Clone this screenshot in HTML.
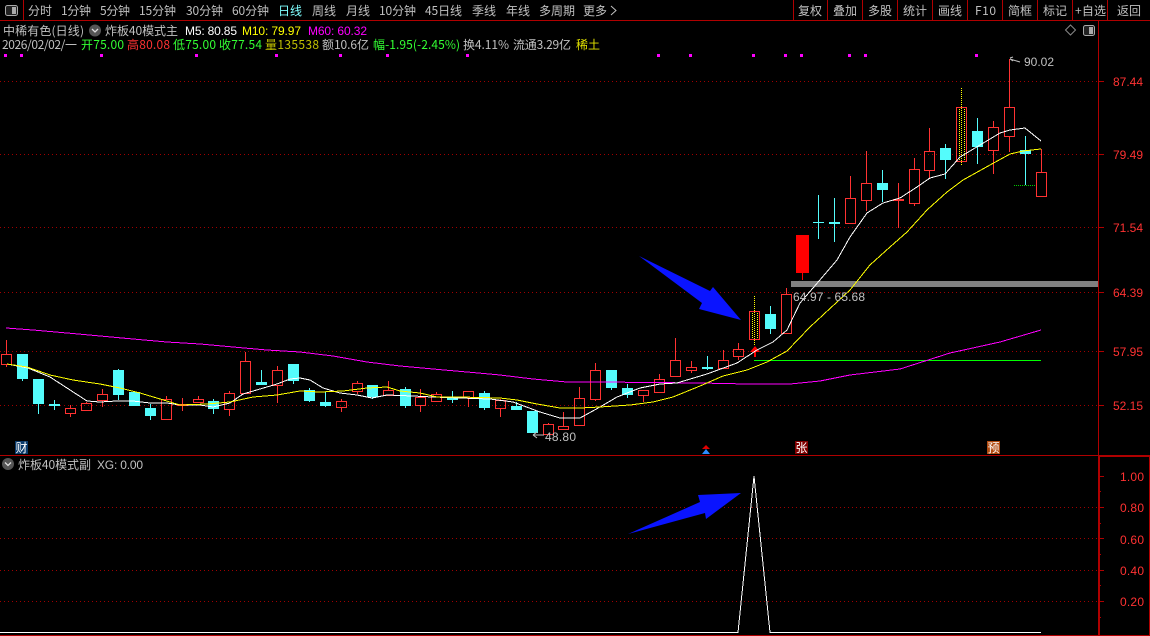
<!DOCTYPE html>
<html><head><meta charset="utf-8">
<style>
html,body{margin:0;padding:0;background:#000;width:1150px;height:636px;overflow:hidden}
svg{display:block}
text{font-family:"Liberation Sans","WenQuanYi Zen Hei","Noto Sans CJK SC",sans-serif;font-size:12px;fill:#c0c0c0}
.c{font-family:"WenQuanYi Zen Hei","Noto Sans CJK SC",sans-serif}
.ax{fill:#ff3232;text-anchor:start}
</style></head><body>
<svg width="1150" height="636" viewBox="0 0 1150 636" xmlns="http://www.w3.org/2000/svg">
<rect width="1150" height="636" fill="#000"/>
<!-- frame -->
<g shape-rendering="crispEdges" fill="none" stroke="#b00000">
<path d="M0 20.5H1150M23.5 0V20M793.5 0V20M827.5 0V20M862.5 0V20M897.5 0V20M932.5 0V20M967.5 0V20M1002.5 0V20M1037.5 0V20M1072.5 0V20M1107.5 0V20"/>
<path d="M1098.5 20V456M0 455.5H1098M0 635.5H1150M1149.5 456V636"/>
<path d="M1098.5 456V636M1099.5 456V636M1098 455.5H1150M1098 456.5H1150"/>
<path d="M1098 81.5h6M1098 154.5h6M1098 227.5h6M1098 292.5h6M1098 351.5h6M1098 405.5h6M1098 476.5h6M1098 507.5h6M1098 538.5h6M1098 570.5h6M1098 601.5h6M1098 491.5h3M1098 523.5h3M1098 554.5h3M1098 585.5h3M1098 617.5h3"/>
<path stroke="#a00000" stroke-dasharray="1 3" d="M0 81.5H1098M0 154.5H1098M0 227.5H1098M0 292.5H1098M0 351.5H1098M0 405.5H1098M0 507.5H1098M0 538.5H1098M0 570.5H1098M0 601.5H1098"/>
</g>
<!-- toolbar -->
<rect x="5.5" y="5.5" width="12" height="10" rx="2" fill="#222" stroke="#aaa"/><rect x="12" y="7" width="4" height="7" fill="#aaa"/>
<g class="c">
<text class="c" x="28" y="15" textLength="24">分时</text>
<text class="c" x="61" y="15" textLength="30">1分钟</text>
<text class="c" x="100" y="15" textLength="30">5分钟</text>
<text class="c" x="139" y="15" textLength="37">15分钟</text>
<text class="c" x="186" y="15" textLength="37">30分钟</text>
<text class="c" x="232" y="15" textLength="37">60分钟</text>
<text class="c" x="278" y="15" textLength="24" style="fill:#7fffff">日线</text>
<text class="c" x="312" y="15" textLength="24">周线</text>
<text class="c" x="346" y="15" textLength="24">月线</text>
<text class="c" x="379" y="15" textLength="37">10分钟</text>
<text class="c" x="425" y="15" textLength="37">45日线</text>
<text class="c" x="472" y="15" textLength="24">季线</text>
<text class="c" x="506" y="15" textLength="24">年线</text>
<text class="c" x="539" y="15" textLength="36">多周期</text>
<text class="c" x="583" y="15" textLength="24">更多</text>
<text class="c" x="798" y="15" textLength="24">复权</text>
<text class="c" x="833" y="15" textLength="24">叠加</text>
<text class="c" x="868" y="15" textLength="24">多股</text>
<text class="c" x="903" y="15" textLength="24">统计</text>
<text class="c" x="938" y="15" textLength="24">画线</text>
<text class="c" x="975" y="15" textLength="21">F10</text>
<text class="c" x="1008" y="15" textLength="24">简框</text>
<text class="c" x="1043" y="15" textLength="24">标记</text>
<text class="c" x="1075" y="15" textLength="31">+自选</text>
<text class="c" x="1117" y="15" textLength="24">返回</text>
</g>
<path d="M611 6l5 4.500-5 4.500" fill="none" stroke="#c0c0c0"/>
<!-- info rows -->
<text class="c" x="3" y="35" textLength="81">中稀有色(日线)</text>
<circle cx="95" cy="30.500" r="6" fill="#555"/><path d="M92 29l3 3 3-3" fill="none" stroke="#ddd" stroke-width="1.300"/>
<text class="c" x="105" y="35" textLength="73">炸板40模式主</text>
<text x="185" y="35" textLength="52" style="fill:#fff">M5: 80.85</text>
<text x="242" y="35" textLength="59" style="fill:#ff0">M10: 79.97</text>
<text x="308" y="35" textLength="59" style="fill:#f0f">M60: 60.32</text>
<text class="c" x="2" y="49" textLength="75">2026/02/02/一</text>
<text class="c" x="81" y="49" textLength="43" style="fill:#3f3">开75.00</text>
<text class="c" x="127" y="49" textLength="43" style="fill:#ff3232">高80.08</text>
<text class="c" x="173" y="49" textLength="43" style="fill:#3f3">低75.00</text>
<text class="c" x="219" y="49" textLength="43" style="fill:#3f3">收77.54</text>
<text class="c" x="265" y="49" textLength="54" style="fill:#c0c000">量135538</text>
<text class="c" x="322" y="49" textLength="47">额10.6亿</text>
<text class="c" x="373" y="49" textLength="87" style="fill:#3f3">幅-1.95(-2.45%)</text>
<text class="c" x="463" y="49" textLength="46">换4.11%</text>
<text class="c" x="513" y="49" textLength="58">流通3.29亿</text>
<text class="c" x="576" y="49" textLength="24" style="fill:#e0e000">稀土</text>
<path d="M1070.500 25l5 5-5 5-5-5z" fill="none" stroke="#888"/>
<rect x="1083.500" y="25.500" width="11" height="10" rx="2" fill="#222" stroke="#aaa"/><rect x="1089" y="27" width="4" height="7" fill="#aaa"/>
<!-- magenta dots -->
<path fill="#f0f" shape-rendering="crispEdges" d="M4 54h3v3h-3zM20 54h3v3h-3zM100 54h3v3h-3zM195 54h3v3h-3zM275 54h3v3h-3zM339 54h3v3h-3zM386 54h3v3h-3zM466 54h3v3h-3zM657 54h3v3h-3zM689 54h3v3h-3zM752 54h3v3h-3zM784 54h3v3h-3zM800 54h3v3h-3zM848 54h3v3h-3zM864 54h3v3h-3zM975 54h3v3h-3z"/>
<!-- gray bar + green -->
<rect x="791" y="281" width="307" height="6" fill="#808080" shape-rendering="crispEdges"/>
<rect x="754" y="360" width="287" height="1" fill="#0f0" shape-rendering="crispEdges"/>
<path d="M1014 185.500h22" stroke="#0c0" stroke-dasharray="1 1" shape-rendering="crispEdges"/>
<!-- red hollow candles -->
<path fill="none" stroke="#ff3232" shape-rendering="crispEdges" d="
M6.500 340V354M6.500 364V367M1.500 354.500h10V364.500h-10z
M70.500 405V408M70.500 413V417M65.500 408.500h10V413.500h-10z
M86.500 402V403M81.500 403.500h10V410.500h-10z
M102.500 389V394M102.500 400V407M97.500 394.500h10V400.500h-10z
M166.500 396V399M161.500 399.500h10V419.500h-10z
M198.500 396V399M198.500 402V403M193.500 399.500h10V402.500h-10z
M229.500 391V393M229.500 409V416M224.500 393.500h10V409.500h-10z
M245.500 352V361M240.500 361.500h10V393.500h-10z
M277.500 366V370M277.500 385V403M272.500 370.500h10V385.500h-10z
M341.500 399V401M341.500 407V412M336.500 401.500h10V407.500h-10z
M357.500 381V383M357.500 391V394M352.500 383.500h10V391.500h-10z
M388.500 381V390M383.500 390.500h10V395.500h-10z
M420.500 389V397M420.500 405V412M415.500 397.500h10V405.500h-10z
M436.500 392V394M431.500 394.500h10V401.500h-10z
M468.500 397V407M463.500 391.500h10V397.500h-10z
M500.500 399V400M500.500 408V417M495.500 400.500h10V408.500h-10z
M548.500 423V424M543.500 424.500h10V434.500h-10z
M563.500 412V426M558.500 426.500h10V429.500h-10z
M579.500 387V398M574.500 398.500h10V425.500h-10z
M595.500 363V370M595.500 399V401M590.500 370.500h10V399.500h-10z
M643.500 395V402M638.500 390.500h10V395.500h-10z
M659.500 374V379M654.500 379.500h10V392.500h-10z
M675.500 338V360M670.500 360.500h10V376.500h-10z
M691.500 361V367M691.500 370V373M686.500 367.500h10V370.500h-10z
M723.500 350V360M723.500 368V369M718.500 360.500h10V368.500h-10z
M738.500 343V349M738.500 356V360M733.500 349.500h10V356.500h-10z
M749.500 311.500h10V339.500h-10z
M786.500 288V294M781.500 294.500h10V333.500h-10z
M850.500 176V198M845.500 198.500h10V223.500h-10z
M866.500 151V183M866.500 200V211M861.500 183.500h10V200.500h-10z
M914.500 158V169M914.500 203V206M909.500 169.500h10V203.500h-10z
M929.500 128V151M929.500 170V178M924.500 151.500h10V170.500h-10z
M956.500 107.500h10V161.500h-10z
M993.500 121V127M993.500 150V174M988.500 127.500h10V150.500h-10z
M1009.500 59V107M1009.500 136V152M1004.500 107.500h10V136.500h-10z
M1041.500 149V172M1036.500 172.500h10V196.500h-10z
M182.500 398V411M898.500 183V228"/>
<path fill="#ff3232" shape-rendering="crispEdges" d="M177 404h11v2h-11zM893 199h11v2h-11z"/>
<path fill="#f00" shape-rendering="crispEdges" d="M796 235h13v38h-13zM802 273h1v7h-1z"/>
<!-- yellow dotted in doji bodies -->
<path fill="none" stroke="#ff0" stroke-dasharray="1 1" shape-rendering="crispEdges" d="M754.500 296V346M752.500 313V338M757.500 313V338M961.500 88V165M959.500 109V160M964.500 109V160"/>
<!-- red up arrow -->
<path fill="#f00" d="M755 346l-5 6h4v5h2v-5h4z"/>
<!-- cyan candles -->
<path fill="none" stroke="#54fcfc" shape-rendering="crispEdges" d="M22.500 379V381M38.500 404V414M54.500 400V410M118.500 369V370M118.500 395V400M150.500 404V408M150.500 416V420M213.500 399V401M213.500 409V414M261.500 370V382M293.500 381V384M309.500 388V390M309.500 401V402M325.500 392V402M325.500 406V407M372.500 397V399M405.500 387V389M405.500 406V408M452.500 391V398M452.500 400V403M484.500 391V393M484.500 408V410M516.500 402V406M611.500 388V390M627.500 384V388M627.500 395V398M707.500 356V370M770.500 306V314M770.500 329V334M818.500 195V239M834.500 198V242M882.500 170V183M882.500 190V202M945.500 144V148M945.500 160V179M977.500 118V131M977.500 147V164M1025.500 136V150M1025.500 154V185"/>
<path fill="#54fcfc" shape-rendering="crispEdges" d="M17 354h11v25h-11zM33 379h11v25h-11zM49 404h11v2h-11zM113 370h11v25h-11zM129 392h11v14h-11zM145 408h11v8h-11zM208 401h11v8h-11zM256 382h11v3h-11zM288 364h11v17h-11zM304 390h11v11h-11zM320 402h11v4h-11zM367 385h11v12h-11zM400 389h11v17h-11zM447 398h11v2h-11zM479 393h11v15h-11zM511 406h11v4h-11zM527 411h11v22h-11zM606 370h11v18h-11zM622 388h11v7h-11zM702 367h11v2h-11zM765 314h11v15h-11zM813 222h11v1h-11zM829 222h11v2h-11zM877 183h11v7h-11zM940 148h11v12h-11zM972 131h11v16h-11zM1020 150h11v4h-11z"/>
<!-- MA lines -->
<polyline fill="none" stroke="#f0f" stroke-width="1" shape-rendering="crispEdges" points="6,328 33,330 67,333 100,336 133,339 167,342 200,344 233,347 267,350 300,352 333,356 367,362 400,366 433,369 467,372 500,375 533,379 567,382 600,382 700,383 747,384 790,384 820,381 850,375 900,369 950,353 1000,342 1041,330"/>
<polyline fill="none" stroke="#fff" stroke-width="1" shape-rendering="crispEdges" points="7,364 28,368 50,377 67,388 87,401 100,402 117,401 133,401 150,403 167,403 180,405 200,405 213,407 230,403 243,394 260,389 277,384 290,379 300,378 310,380 323,388 340,393 357,395 372,398 387,395 413,396 433,397 460,398 490,399 513,402 540,412 560,418 580,418 600,407 617,397 640,388 660,384 677,383 707,374 737,363 757,350 773,342 787,330 800,303 813,288 837,260 850,237 867,213 883,203 900,198 917,187 930,178 945,174 960,157 980,145 1000,133 1010,130 1025,128 1041,141"/>
<polyline fill="none" stroke="#ff0" stroke-width="1" shape-rendering="crispEdges" points="7,364 27,367 50,375 73,380 100,384 120,388 140,393 160,399 180,405 207,404 230,402 253,397 277,395 300,391 320,392 343,391 367,388 387,387 400,391 420,393 437,397 460,397 500,398 517,400 537,404 560,408 580,408 600,407 630,405 653,402 673,397 700,386 723,376 747,370 767,362 787,351 810,327 850,290 870,265 890,247 907,232 927,210 947,192 963,180 990,165 1010,154 1023,151 1041,149"/>
<!-- labels on chart -->
<text x="793" y="301" textLength="72">64.97 - 65.68</text>
<text x="1024" y="66" textLength="30">90.02</text>
<path d="M1010 59l10 3M1010 58l3-1M1010 59l3 2" fill="none" stroke="#c0c0c0"/>
<text x="545" y="441" textLength="31">48.80</text>
<path d="M533 435h11M533 435l4-3M533 435l4 3" fill="none" stroke="#c0c0c0"/>
<!-- blue arrows -->
<polygon fill="#0a14ff" points="639,256 710,291 713,287 741,320 699,309 702,303"/>
<polygon fill="#0a14ff" points="628,534 700,502 698,495 741,493 706,519 705,513"/>
<!-- markers -->
<rect x="15" y="441" width="13" height="13" fill="#0a3a6a" shape-rendering="crispEdges"/><text class="c" x="15.500" y="452" style="fill:#fff">财</text>
<path fill="#e00000" d="M706 445l4 4h-8z"/><path fill="#2a8cff" d="M706 449l4 5h-8z"/>
<rect x="795" y="441" width="13" height="13" fill="#800000" shape-rendering="crispEdges"/><text class="c" x="795.500" y="452" style="fill:#fff">张</text>
<rect x="987" y="441" width="13" height="13" fill="#b04a10" shape-rendering="crispEdges"/><text class="c" x="987.500" y="452" style="fill:#fff">预</text>
<!-- axis labels -->
<g>
<text class="ax" x="1113" y="86" textLength="30">87.44</text>
<text class="ax" x="1113" y="159" textLength="30">79.49</text>
<text class="ax" x="1113" y="232" textLength="30">71.54</text>
<text class="ax" x="1113" y="297" textLength="30">64.39</text>
<text class="ax" x="1113" y="356" textLength="30">57.95</text>
<text class="ax" x="1113" y="410" textLength="30">52.15</text>
<text class="ax" x="1120" y="481" textLength="24">1.00</text>
<text class="ax" x="1120" y="512" textLength="24">0.80</text>
<text class="ax" x="1120" y="544" textLength="24">0.60</text>
<text class="ax" x="1120" y="575" textLength="24">0.40</text>
<text class="ax" x="1120" y="606" textLength="24">0.20</text>
</g>
<!-- lower panel -->
<circle cx="8" cy="464" r="6" fill="#555"/><path d="M5 462.500l3 3 3-3" fill="none" stroke="#ddd" stroke-width="1.300"/>
<text class="c" x="18" y="469" textLength="73">炸板40模式副</text>
<text x="97" y="469" textLength="46">XG: 0.00</text>
<polyline fill="none" stroke="#fff" stroke-width="1" shape-rendering="crispEdges" points="0,632.500 738,632.500 754,476 770,632.500 1041,632.500"/>
</svg>
</body></html>
